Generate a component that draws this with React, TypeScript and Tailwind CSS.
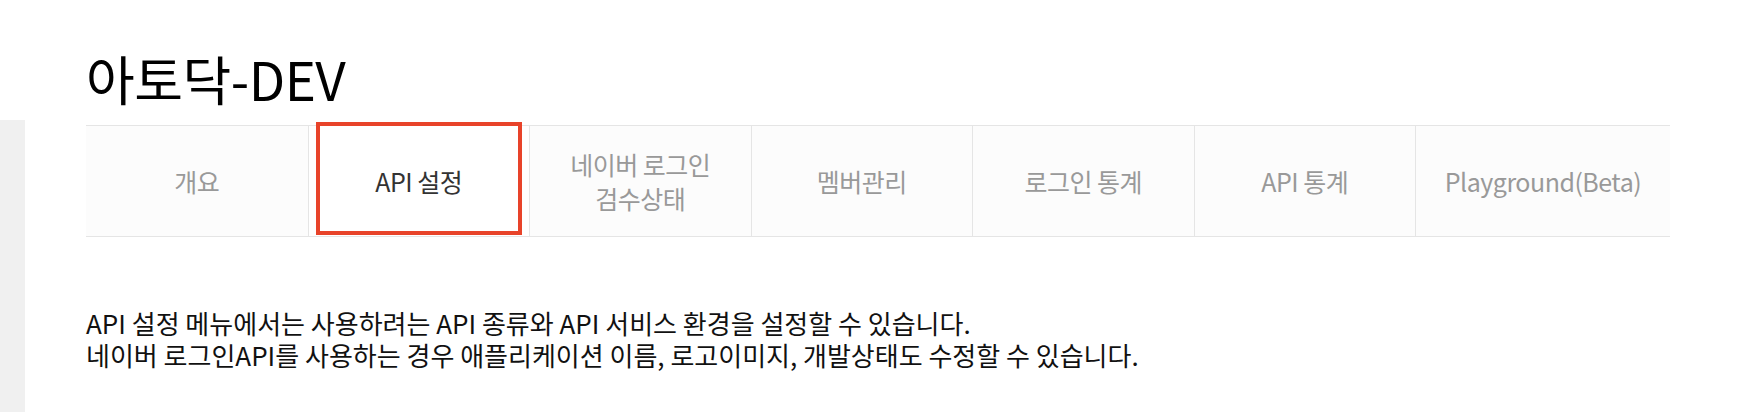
export default function App() {
  const tabs = [
    { label: "개요" },
    { label: "API 설정", active: true },
    { label: "네이버 로그인\n검수상태" },
    { label: "멤버관리" },
    { label: "로그인 통계" },
    { label: "API 통계" },
    { label: "Playground(Beta)" },
  ];

  return (
    <div className="flex h-[412px] w-full overflow-hidden bg-white font-['Noto_Sans_CJK_KR','Noto_Sans',sans-serif]">
      <div className="mt-[120px] w-[25px] shrink-0 bg-[#f0f0f0]" />
      <div className="flex-1 pl-[61px]">
        <h1 className="mt-[44px] text-[53px] leading-[68px] font-normal tracking-[-0.5px] text-black">아토닥-DEV</h1>
        <div className="mt-[13px] flex h-[112px] w-[1584px] border-y border-[#e5e5e5] bg-[#fcfcfc]">
          {tabs.map((tab, idx) => (
            <div
              key={idx}
              className={
                "relative flex h-full items-center justify-center text-center text-[25px] leading-[34px] tracking-[-0.5px] whitespace-pre-line " +
                (idx > 0 ? "border-l border-[#e5e5e5] " : "") +
                (idx === tabs.length - 1 ? "flex-1 " : "w-[221.5px] ") +
                (tab.active ? "bg-white text-[#333333]" : "text-[#999999]")
              }
            >
              {tab.label}
              {tab.active && (
                <div className="absolute top-[-4px] bottom-[1px] left-[7px] right-[7px] border-[4px] border-[#e8432a]" />
              )}
            </div>
          ))}
        </div>
        <p className="mt-[70px] text-[26px] leading-[32px] text-[#111111]">
          API 설정 메뉴에서는 사용하려는 API 종류와 API 서비스 환경을 설정할 수 있습니다.
          <br />
          네이버 로그인API를 사용하는 경우 애플리케이션 이름, 로고이미지, 개발상태도 수정할 수 있습니다.
        </p>
      </div>
    </div>
  );
}
